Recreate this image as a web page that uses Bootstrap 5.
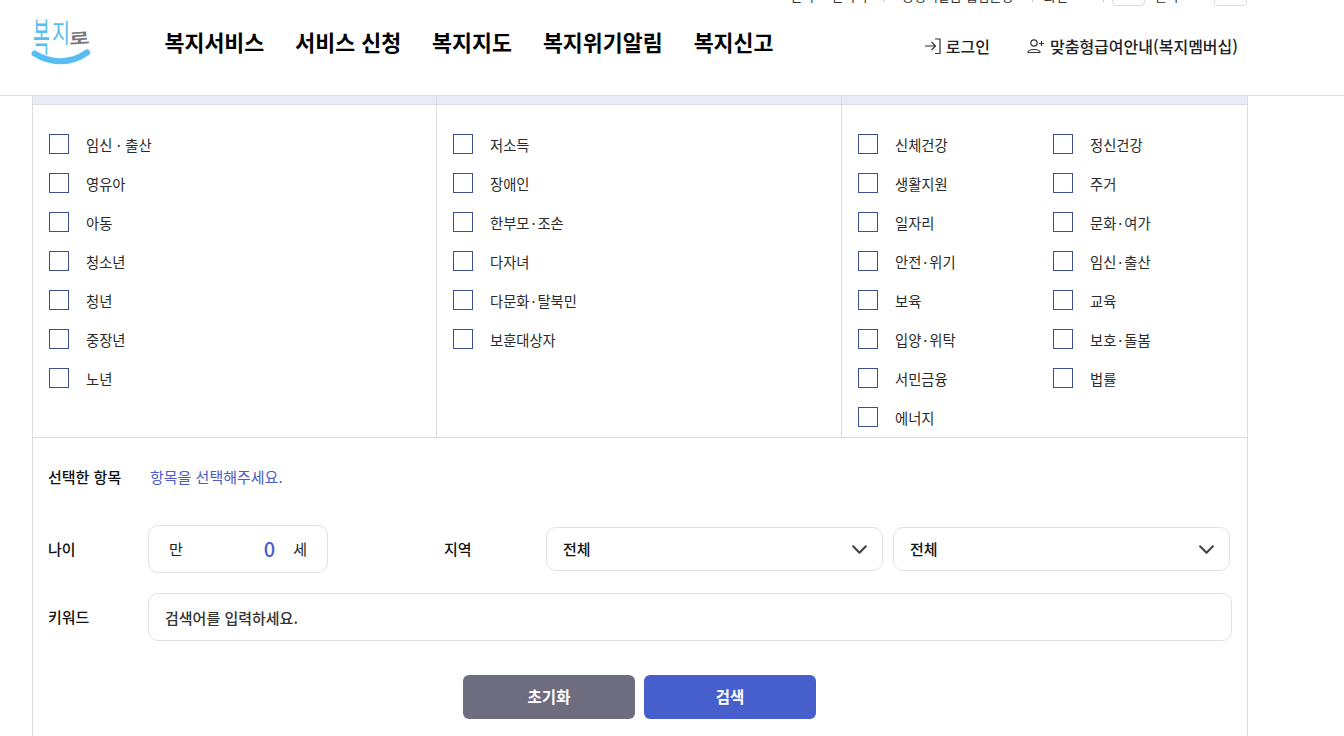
<!DOCTYPE html>
<html lang="ko">
<head>
<meta charset="utf-8">
<title>복지로</title>
<link href="https://cdn.jsdelivr.net/npm/bootstrap@5.3.0/dist/css/bootstrap.min.css" rel="stylesheet">
<style>
html,body{height:736px;overflow:hidden;background:#fff}
body{font-family:"Noto Sans CJK KR","Noto Sans",sans-serif;font-size:15px;color:#222}
.util-strip{height:6px;overflow:hidden;width:1216px;margin-left:32px;font-size:13px;line-height:18px;color:#333}
.util-strip>div{margin-top:-15px;height:21px;padding-left:758px}
.util-sep{width:1px;height:14px;background:#ccc;margin-top:-1px}
.util-g1{width:93px;word-spacing:14px}
.util-g2{width:148px;padding-left:18px}
.util-g3{width:70px;padding-left:11px}
.util-g4{width:69px;padding-left:10px}
.util-box{width:33px;height:21px;border:1px solid #ddd;border-radius:4px;background:#fff;flex:none}
.site-head{height:89px;border-bottom:1px solid #e2e2e2;box-sizing:content-box;padding-left:31px;padding-right:106px}
.logo-wrap{width:60px;height:50px;margin-top:10px;flex:none}
.logo-word{height:31px;color:#57bdf2}
.logo-word span{display:block;line-height:30px;transform-origin:left center}
.logo-one{font-size:23px;font-weight:400;width:20px;transform:translate(2px,3px) scale(.8,1.7)}
.logo-two{font-size:23px;font-weight:400;width:18px;transform:translate(1px,1px) scale(.85,1.15)}
.logo-three{font-size:26px;font-weight:700;width:18px;color:#77777c;transform:translate(0,7px) rotate(-4deg) scale(.85,.6)}
.main-nav{margin-left:73.500px;gap:31px;font-size:21.7px;line-height:30px;font-weight:700;color:#000;padding-top:21px}
.main-nav a{color:#000;text-decoration:none;white-space:nowrap}
.user-nav{gap:37px;font-size:16px;font-weight:500;padding-top:28px;color:#222}
.user-nav a{color:#222;text-decoration:none;white-space:nowrap;gap:5px;line-height:24px;height:24px}
.sheet{width:1216px;margin-left:32px;height:641px;border-left:1px solid #dcdcdc;border-right:1px solid #dcdcdc}
.grid-head{display:grid;grid-template-columns:404px 405px 405px;height:9px;background:#e9ecf8;border-bottom:1px solid #dcdde6}
.grid-head>div+div{border-left:1px solid #dcdde6;margin-left:-1px}
.grid-body{display:grid;grid-template-columns:404px 405px 405px;height:333px;border-bottom:1px solid #dcdcdc}
.grid-body>div{padding:29px 0 0 16px}
.grid-body>div+div{border-left:1px solid #dcdcdc;padding-left:16px;margin-left:-1px}
.check-list{display:flex;flex-direction:column;gap:19px}
.check-two{display:grid;grid-template-columns:195px 180px;row-gap:19px}
.check-row{display:flex;align-items:center;gap:17px;height:20px;margin:0;color:#2a2a2a;font-size:14.3px;line-height:20px}
.check-row span{padding-top:2px}
.check-row span i{font-style:normal;margin:0 2px;padding:0}
.check-row span i.dot-tight{margin:0 .5px}
.check-row input{appearance:none;width:20px;height:20px;border:1px solid #3c4f8f;border-radius:0;background:#fff;margin:0;flex:none}
.form-zone{padding:29px 15px 0}
.row-label{width:100px;flex:none;font-weight:500;color:#111}
.pick-text{color:#4a5cc9;line-height:20px;margin-left:2px}
.pick-line{height:20px;margin-bottom:38px}
.age-line{height:48px;margin-bottom:20px}
.age-box{width:180px;height:48px;border:1px solid #e2e2e2;border-radius:10px;padding:0 20px;color:#222}
.age-num{color:#465fcd;font-size:20px;font-weight:500;margin-left:auto;margin-right:18px}
.area-label{margin-left:116px;width:102px;font-weight:500;flex:none;color:#111}
.area-select{width:337px;height:44px;border:1px solid #e2e2e2;border-radius:10px;padding:0 40px 0 16px;font-size:15px;font-weight:500;color:#111;background-image:url("data:image/svg+xml,%3csvg xmlns='http://www.w3.org/2000/svg' viewBox='0 0 16 16'%3e%3cpath fill='none' stroke='%23444' stroke-width='2' stroke-linecap='round' stroke-linejoin='round' d='M2 5l6 6 6-6'/%3e%3c/svg%3e");background-position:right 14px center;background-size:17px 17px;font-family:inherit}
.area-select+.area-select{margin-left:10px}
.keyword-input{width:1084px;height:48px;border:1px solid #e2e2e2;border-radius:10px;padding:0 16px;font-size:15px;color:#333;font-family:inherit}
.keyword-input::placeholder{color:#333;opacity:1;font-weight:500}
.action-line{margin-top:34px;padding-left:415px;gap:9px}
.act-btn{width:172px;height:44px;border:0;border-radius:6px;color:#fff;font-size:15.500px;font-weight:700;padding:0}
.act-reset{background:#6d6d7f}
.act-search{background:#465fcd}
</style>
</head>
<body>
<div class="util-strip">
<div class="d-flex align-items-center">
<span class="util-g1">언어 한국어</span><span class="util-sep"></span><span class="util-g2">증명서발급 웹접근성</span><span class="util-sep"></span><span class="util-g3">화면</span><span class="util-sep"></span>
<span class="util-box ms-2"></span><span class="util-g4">글자</span><span class="util-box"></span>
</div>
</div>
<header class="site-head d-flex">
<a class="logo-wrap d-block text-decoration-none" href="#">
<div class="logo-word d-flex"><span class="logo-one">복</span><span class="logo-two">지</span><span class="logo-three">로</span></div>
<svg width="60" height="19" viewBox="0 0 60 19" class="d-block"><path d="M3.500 6.500C20 17 40 17 56 5.500" fill="none" stroke="#57bdf2" stroke-width="6" stroke-linecap="round"/></svg>
</a>
<nav class="main-nav d-flex">
<a href="#">복지서비스</a><a href="#">서비스 신청</a><a href="#">복지지도</a><a href="#">복지위기알림</a><a href="#">복지신고</a>
</nav>
<div class="user-nav d-flex ms-auto">
<a href="#" class="d-flex align-items-center"><svg width="17" height="16" viewBox="0 0 17 16"><path d="M1 8H11.500M7.500 4L11.500 8L7.500 12M11 1H16V15.500H11" fill="none" stroke="#333" stroke-width="1.200"/></svg>로그인</a>
<a href="#" class="d-flex align-items-center"><svg width="18" height="16" viewBox="0 0 18 16"><circle cx="7" cy="5" r="3.200" fill="none" stroke="#333" stroke-width="1.200"/><path d="M1 14.500C1 10.500 13 10.500 13 14.500ZM14.500 3V8M12 5.500H17" fill="none" stroke="#333" stroke-width="1.200"/></svg>맞춤형급여안내(복지멤버십)</a>
</div>
</header>
<main class="sheet">
<div class="grid-head"><div></div><div></div><div></div></div>
<div class="grid-body">
<div><div class="check-list">
<label class="check-row"><input type="checkbox"><span>임신 <i class="dot-tight">·</i> 출산</span></label>
<label class="check-row"><input type="checkbox"><span>영유아</span></label>
<label class="check-row"><input type="checkbox"><span>아동</span></label>
<label class="check-row"><input type="checkbox"><span>청소년</span></label>
<label class="check-row"><input type="checkbox"><span>청년</span></label>
<label class="check-row"><input type="checkbox"><span>중장년</span></label>
<label class="check-row"><input type="checkbox"><span>노년</span></label>
</div></div>
<div><div class="check-list">
<label class="check-row"><input type="checkbox"><span>저소득</span></label>
<label class="check-row"><input type="checkbox"><span>장애인</span></label>
<label class="check-row"><input type="checkbox"><span>한부모<i>·</i>조손</span></label>
<label class="check-row"><input type="checkbox"><span>다자녀</span></label>
<label class="check-row"><input type="checkbox"><span>다문화<i>·</i>탈북민</span></label>
<label class="check-row"><input type="checkbox"><span>보훈대상자</span></label>
</div></div>
<div><div class="check-two">
<label class="check-row"><input type="checkbox"><span>신체건강</span></label>
<label class="check-row"><input type="checkbox"><span>정신건강</span></label>
<label class="check-row"><input type="checkbox"><span>생활지원</span></label>
<label class="check-row"><input type="checkbox"><span>주거</span></label>
<label class="check-row"><input type="checkbox"><span>일자리</span></label>
<label class="check-row"><input type="checkbox"><span>문화<i>·</i>여가</span></label>
<label class="check-row"><input type="checkbox"><span>안전<i>·</i>위기</span></label>
<label class="check-row"><input type="checkbox"><span>임신<i>·</i>출산</span></label>
<label class="check-row"><input type="checkbox"><span>보육</span></label>
<label class="check-row"><input type="checkbox"><span>교육</span></label>
<label class="check-row"><input type="checkbox"><span>입양<i>·</i>위탁</span></label>
<label class="check-row"><input type="checkbox"><span>보호<i>·</i>돌봄</span></label>
<label class="check-row"><input type="checkbox"><span>서민금융</span></label>
<label class="check-row"><input type="checkbox"><span>법률</span></label>
<label class="check-row"><input type="checkbox"><span>에너지</span></label>
</div></div>
</div>
<div class="form-zone">
<div class="pick-line d-flex align-items-center"><div class="row-label">선택한 항목</div><div class="pick-text">항목을 선택해주세요.</div></div>
<div class="age-line d-flex align-items-center">
<div class="row-label">나이</div>
<div class="age-box d-flex align-items-center"><span>만</span><span class="age-num">0</span><span>세</span></div>
<div class="area-label">지역</div>
<select class="form-select area-select"><option>전체</option></select>
<select class="form-select area-select"><option>전체</option></select>
</div>
<div class="d-flex align-items-center">
<div class="row-label">키워드</div>
<input class="form-control keyword-input" type="text" placeholder="검색어를 입력하세요.">
</div>
<div class="action-line d-flex">
<button class="act-btn act-reset" type="button">초기화</button>
<button class="act-btn act-search" type="button">검색</button>
</div>
</div>
</main>
<script src="https://cdn.jsdelivr.net/npm/bootstrap@5.3.0/dist/js/bootstrap.bundle.min.js"></script>
</body>
</html>
